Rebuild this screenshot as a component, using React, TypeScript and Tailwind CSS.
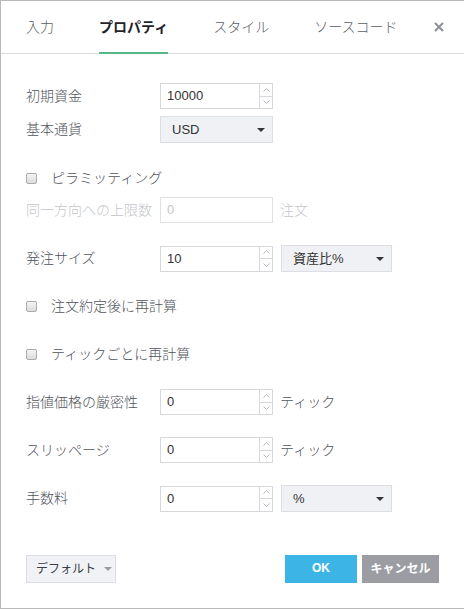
import React from "react";

const font = "font-['Liberation_Sans','Noto_Sans_CJK_JP',sans-serif]";

function Spinner() {
  return (
    <div className="flex w-[13px] flex-col border-l border-[#d6d8dc]">
      <div className="flex flex-1 items-center justify-center border-b border-[#d6d8dc]">
        <svg width="7" height="4" viewBox="0 0 7 4">
          <path d="M0.5 3.5 L3.5 0.5 L6.5 3.5" fill="none" stroke="#b8bbc1" strokeWidth="1" />
        </svg>
      </div>
      <div className="flex flex-1 items-center justify-center">
        <svg width="7" height="4" viewBox="0 0 7 4">
          <path d="M0.5 0.5 L3.5 3.5 L6.5 0.5" fill="none" stroke="#b8bbc1" strokeWidth="1" />
        </svg>
      </div>
    </div>
  );
}

function NumberInput({ value }: { value: string }) {
  return (
    <div className="flex h-[26px] w-[113px] border border-[#d6d8dc] bg-white">
      <div className="flex flex-1 items-center pl-[6px] text-[13px] text-[#333]">{value}</div>
      <Spinner />
    </div>
  );
}

function Caret({ color = "#333" }: { color?: string }) {
  return (
    <svg width="8" height="4" viewBox="0 0 8 4">
      <path d="M0 0 H8 L4 4 Z" fill={color} />
    </svg>
  );
}

function Select({ value, width }: { value: string; width: string }) {
  return (
    <div
      className={`flex h-[27px] ${width} items-center justify-between border border-[#dcdee3] bg-[#f0f1f5] pl-[11px] pr-[7px] text-[13px] text-[#333]`}
    >
      <span>{value}</span>
      <Caret />
    </div>
  );
}

function Label({ children, muted }: { children: React.ReactNode; muted?: boolean }) {
  return (
    <div className={`w-[134px] text-[14px] font-light ${muted ? "text-[#c4c6ca]" : "text-[#50535b]"}`}>
      {children}
    </div>
  );
}

function Check({ label, className }: { label: string; className: string }) {
  return (
    <div className={`flex h-[20px] items-center ${className}`}>
      <div className="h-[11px] w-[11px] rounded-[2px] border border-[#a9abaf] bg-gradient-to-b from-[#f4f4f4] to-[#dcdcdc]" />
      <span className="ml-[14px] text-[14px] font-light text-[#50535b]">{label}</span>
    </div>
  );
}

export default function App() {
  const tabs = ["入力", "プロパティ", "スタイル", "ソースコード"];
  return (
    <div className={`flex h-[609px] w-[464px] flex-col border-b border-l border-t border-[#b9b9b9] bg-white ${font}`}>
      <div className="flex h-[53px] shrink-0 items-stretch border-b border-[#dcdcdc] pl-[25px] pr-[20px]">
        <div className="flex gap-[45px]">
          {tabs.map((t, i) => (
            <div
              key={t}
              className={`flex items-center text-[14px] ${
                i === 1
                  ? "-mb-px border-b-2 border-[#53b987] pt-[2px] font-bold text-[#1f232b]"
                  : "font-light text-[#5a5e66]"
              }`}
            >
              {t}
            </div>
          ))}
        </div>
        <div className="ml-auto flex items-center pb-[1px]">
          <svg width="10" height="10" viewBox="0 0 10 10">
            <path d="M1 1 L9 9 M9 1 L1 9" stroke="#8d9099" strokeWidth="2" />
          </svg>
        </div>
      </div>

      <div className="flex flex-col pl-[25px]">
        <div className="mt-[29px] flex items-center">
          <Label>初期資金</Label>
          <NumberInput value="10000" />
        </div>
        <div className="mt-[7px] flex items-center">
          <Label>基本通貨</Label>
          <Select value="USD" width="w-[113px]" />
        </div>

        <Check label="ピラミッティング" className="mt-[25px]" />

        <div className="mt-[9px] flex items-center">
          <Label muted>同一方向への上限数</Label>
          <div className="flex h-[26px] w-[113px] items-center border border-[#dfe1e4] pl-[6px] text-[13px] text-[#c4c6ca]">
            0
          </div>
          <span className="ml-[7px] text-[14px] font-light text-[#c4c6ca]">注文</span>
        </div>

        <div className="mt-[22px] flex items-center">
          <Label>発注サイズ</Label>
          <NumberInput value="10" />
          <div className="ml-[8px]">
            <Select value="資産比%" width="w-[111px]" />
          </div>
        </div>

        <Check label="注文約定後に再計算" className="mt-[24px]" />
        <Check label="ティックごとに再計算" className="mt-[28px]" />

        <div className="mt-[25px] flex items-center">
          <Label>指値価格の厳密性</Label>
          <NumberInput value="0" />
          <span className="ml-[7px] text-[14px] font-light text-[#50535b]">ティック</span>
        </div>
        <div className="mt-[22px] flex items-center">
          <Label>スリッページ</Label>
          <NumberInput value="0" />
          <span className="ml-[7px] text-[14px] font-light text-[#50535b]">ティック</span>
        </div>
        <div className="mt-[22px] flex items-center">
          <Label>手数料</Label>
          <NumberInput value="0" />
          <div className="ml-[8px]">
            <Select value="%" width="w-[111px]" />
          </div>
        </div>

        <div className="mt-[43px] flex items-center pr-[25px]">
          <div className="flex h-[28px] w-[90px] items-center border border-[#dcdee3] bg-[#f1f2f6] pl-[9px] text-[12px] text-[#3a3d44]">
            <span>デフォルト</span>
            <span className="ml-[8px]">
              <Caret color="#9a9da3" />
            </span>
          </div>
          <div className="ml-auto flex gap-[5px]">
            <div className="flex h-[28px] w-[72px] items-center justify-center bg-[#3db4e6] pb-[3px] text-[12px] font-bold text-white">
              OK
            </div>
            <div className="flex h-[28px] w-[77px] items-center justify-center bg-[#9b9da3] text-[12px] font-bold text-white">
              キャンセル
            </div>
          </div>
        </div>
      </div>
    </div>
  );
}
